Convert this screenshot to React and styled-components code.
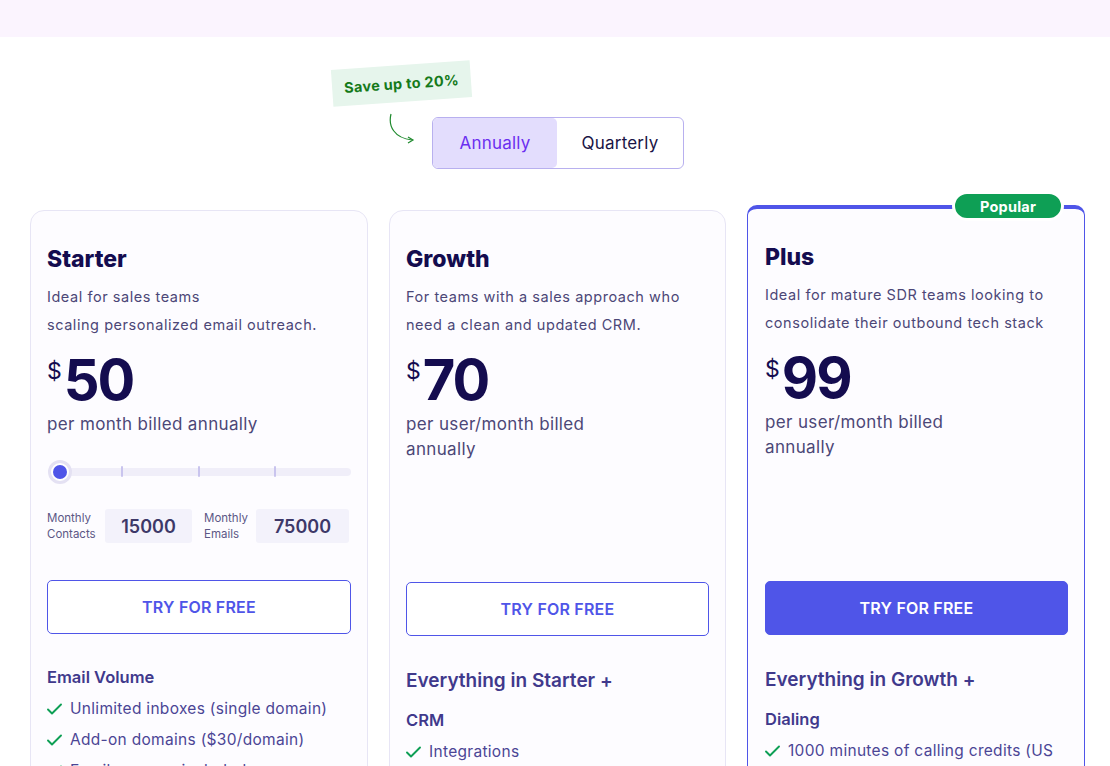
import styled, { createGlobalStyle, css } from "styled-components";

const GlobalStyle = createGlobalStyle`
  * { box-sizing: border-box; }
  body {
    margin: 0;
    background: #ffffff;
    font-family: Inter, "Noto Sans", sans-serif;
    color: #140c4f;
  }
`;

const TopBand = styled.div`
  height: 37px;
  background: #fbf4fe;
`;

const ToggleRow = styled.div`
  display: flex;
  justify-content: center;
  padding-top: 80px;
`;

const ToggleWrap = styled.div`
  position: relative;
  margin-left: 6px;
`;

const Toggle = styled.div`
  display: flex;
  width: 252px;
  height: 52px;
  border: 1px solid #b8b0ef;
  border-radius: 6px;
  overflow: hidden;
`;

const ToggleOption = styled.div`
  flex: ${(p) => (p.$active ? "0 0 124px" : "1")};
  display: flex;
  align-items: center;
  justify-content: center;
  font-size: 17px;
  letter-spacing: 0.2px;
  color: ${(p) => (p.$active ? "#6b2ff0" : "#1a1446")};
  background: ${(p) => (p.$active ? "#e3ddfd" : "transparent")};
  border-radius: ${(p) => (p.$active ? "5px" : "0")};
`;

const SaveTag = styled.div`
  position: absolute;
  left: -100px;
  top: -52px;
  width: 139px;
  height: 37px;
  display: flex;
  align-items: center;
  justify-content: center;
  background: #e6f5ec;
  color: #157a1a;
  font-size: 14.5px;
  font-weight: 700;
  letter-spacing: 0.3px;
  transform: rotate(-4deg);
`;

const Arrow = styled.svg`
  position: absolute;
  left: -44px;
  top: -5px;
`;

const Cards = styled.div`
  display: grid;
  grid-template-columns: 338px 337px 338px;
  column-gap: 21px;
  align-items: start;
  padding: 41px 24px 0 30px;
`;

const Card = styled.div`
  position: relative;
  display: flex;
  flex-direction: column;
  height: 620px;
  padding: 34px 16px 0 16px;
  background: #fdfcff;
  border: 1px solid #e7e5f5;
  border-radius: 14px;
  ${(p) =>
    p.$popular &&
    css`
      margin-top: -5px;
      height: 625px;
      padding: 34px 16px 0 17px;
      border: 1.5px solid #4f55e8;
      border-top-width: 4px;
      border-radius: 10px;
    `}
`;

const Badge = styled.div`
  position: absolute;
  top: -18px;
  right: 20px;
  width: 112px;
  height: 30px;
  display: flex;
  align-items: center;
  justify-content: center;
  background: #0e9f55;
  color: #ffffff;
  font-size: 14.5px;
  font-weight: 700;
  letter-spacing: 0.2px;
  border: 3px solid #ffffff;
  border-radius: 16px;
`;

const Top = styled.div`
  min-height: 298px;
`;

const Title = styled.h2`
  margin: 0;
  font-size: 23px;
  line-height: 28px;
  font-weight: 800;
  color: #140c4f;
`;

const Desc = styled.p`
  margin: 10px 0 0;
  font-size: 14.5px;
  line-height: 28px;
  letter-spacing: 0.55px;
  color: #4c4777;
  white-space: nowrap;
`;

const PriceRow = styled.div`
  display: flex;
  align-items: flex-start;
  margin-top: 9px;
  height: 64px;
`;

const Currency = styled.span`
  font-size: 23px;
  line-height: 23px;
  margin-top: 12px;
  margin-right: 2px;
  color: #140c4f;
`;

const Amount = styled.span`
  font-size: 56px;
  line-height: 64px;
  font-weight: 700;
  letter-spacing: -2px;
  color: #140c4f;
`;

const Billing = styled.div`
  max-width: 220px;
  font-size: 17px;
  line-height: 25px;
  letter-spacing: 0.35px;
  color: #4c4777;
`;

const Slider = styled.div`
  position: relative;
  margin: 23px 0 0 1px;
  height: 24px;
  display: flex;
  align-items: center;
`;

const Track = styled.div`
  flex: 1;
  height: 8px;
  margin-left: 10px;
  border-radius: 4px;
  background: #f0eef9;
`;

const Thumb = styled.div`
  position: absolute;
  left: 0;
  top: 0;
  width: 24px;
  height: 24px;
  border-radius: 50%;
  border: 3px solid #e4e1f3;
  background: #ffffff;
  display: flex;
  align-items: center;
  justify-content: center;
  &::after {
    content: "";
    width: 14px;
    height: 14px;
    border-radius: 50%;
    background: #4f55e8;
  }
`;

const Tick = styled.div`
  position: absolute;
  left: ${(p) => p.$x}px;
  top: 6px;
  width: 2px;
  height: 11px;
  border-radius: 1px;
  background: #c9c4ee;
`;

const InputsRow = styled.div`
  display: flex;
  align-items: center;
  margin-top: 25px;
`;

const FieldLabel = styled.div`
  font-size: 11.5px;
  line-height: 16px;
  color: #5c5785;
  width: ${(p) => p.$w}px;
`;

const FieldBox = styled.div`
  width: ${(p) => p.$w}px;
  height: 34px;
  margin-right: ${(p) => p.$gap || 0}px;
  display: flex;
  align-items: center;
  justify-content: center;
  background: #f3f2fb;
  border-radius: 3px;
  font-size: 18px;
  font-weight: 600;
  color: #3d3868;
`;

const Button = styled.button`
  width: 100%;
  height: 54px;
  margin-top: ${(p) => p.$mt || 37}px;
  border-radius: 5px;
  font-family: inherit;
  font-size: 16px;
  font-weight: 600;
  letter-spacing: 0.2px;
  cursor: pointer;
  border: 1.5px solid #4f55e8;
  color: ${(p) => (p.$filled ? "#ffffff" : "#4f55e8")};
  background: ${(p) => (p.$filled ? "#4f55e8" : "#ffffff")};
`;

const Lead = styled.h3`
  margin: 32px 0 0;
  font-size: 19px;
  line-height: 26px;
  font-weight: 600;
  color: #40398c;
`;

const GroupTitle = styled.h4`
  margin: ${(p) => (p.$first ? "31px" : "14px")} 0 0;
  font-size: 16.5px;
  line-height: 24px;
  font-weight: 600;
  color: #40398c;
`;

const List = styled.ul`
  list-style: none;
  margin: 4px 0 0;
  padding: 0;
`;

const Item = styled.li`
  display: flex;
  align-items: center;
  gap: 8px;
  height: 31px;
  font-size: 15.5px;
  letter-spacing: 0.3px;
  color: #4b4595;
  white-space: nowrap;
`;

const Check = () => (
  <svg width="15" height="12" viewBox="0 0 15 12" fill="none">
    <path d="M1 6.5 L5 10.5 L14 1.5" stroke="#0e9f55" strokeWidth="1.9" strokeLinecap="round" strokeLinejoin="round" />
  </svg>
);

const Features = ({ items }) => (
  <List>
    {items.map((t) => (
      <Item key={t}>
        <Check />
        {t}
      </Item>
    ))}
  </List>
);

export default function App() {
  return (
    <>
      <GlobalStyle />
      <TopBand />
      <ToggleRow>
        <ToggleWrap>
          <SaveTag>Save up to 20%</SaveTag>
          <Arrow width="30" height="36" viewBox="0 0 30 36" fill="none">
            <path d="M3 2 C 0 14, 6 26, 24 28" stroke="#1f8a2e" strokeWidth="1.2" fill="none" />
            <path d="M20 25 L25 28 L20 31" stroke="#1f8a2e" strokeWidth="1.2" fill="none" />
          </Arrow>
          <Toggle>
            <ToggleOption $active>Annually</ToggleOption>
            <ToggleOption>Quarterly</ToggleOption>
          </Toggle>
        </ToggleWrap>
      </ToggleRow>

      <Cards>
        <Card>
          <Top>
            <Title>Starter</Title>
            <Desc>
              Ideal for sales teams
              <br />
              scaling personalized email outreach.
            </Desc>
            <PriceRow>
              <Currency>$</Currency>
              <Amount>50</Amount>
            </PriceRow>
            <Billing>per month billed annually</Billing>
            <Slider>
              <Track />
              <Tick $x={73} />
              <Tick $x={150} />
              <Tick $x={226} />
              <Thumb />
            </Slider>
            <InputsRow>
              <FieldLabel $w={58}>
                Monthly
                <br />
                Contacts
              </FieldLabel>
              <FieldBox $w={87} $gap={12}>15000</FieldBox>
              <FieldLabel $w={52}>
                Monthly
                <br />
                Emails
              </FieldLabel>
              <FieldBox $w={93}>75000</FieldBox>
            </InputsRow>
          </Top>
          <Button>TRY FOR FREE</Button>
          <GroupTitle $first>Email Volume</GroupTitle>
          <Features items={["Unlimited inboxes (single domain)", "Add-on domains ($30/domain)", "Email warmup included"]} />
        </Card>

        <Card>
          <Top>
            <Title>Growth</Title>
            <Desc>
              For teams with a sales approach who
              <br />
              need a clean and updated CRM.
            </Desc>
            <PriceRow>
              <Currency>$</Currency>
              <Amount>70</Amount>
            </PriceRow>
            <Billing>per user/month billed annually</Billing>
          </Top>
          <Button $mt={39}>TRY FOR FREE</Button>
          <Lead>Everything in Starter +</Lead>
          <GroupTitle>CRM</GroupTitle>
          <Features items={["Integrations"]} />
        </Card>

        <Card $popular>
          <Badge>Popular</Badge>
          <Top>
            <Title>Plus</Title>
            <Desc>
              Ideal for mature SDR teams looking to
              <br />
              consolidate their outbound tech stack
            </Desc>
            <PriceRow>
              <Currency>$</Currency>
              <Amount>99</Amount>
            </PriceRow>
            <Billing>per user/month billed annually</Billing>
          </Top>
          <Button $filled $mt={40}>TRY FOR FREE</Button>
          <Lead>Everything in Growth +</Lead>
          <GroupTitle>Dialing</GroupTitle>
          <Features items={["1000 minutes of calling credits (US"]} />
        </Card>
      </Cards>
    </>
  );
}
